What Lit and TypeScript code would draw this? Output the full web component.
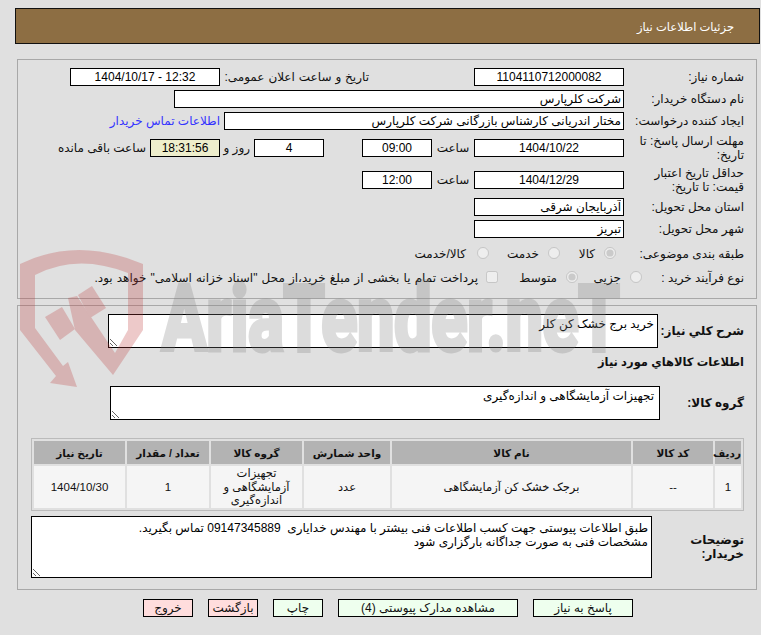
import { LitElement, html, css } from "lit";
import { customElement } from "lit/decorators.js";

@customElement("app-root")
export class AppRoot extends LitElement {
  static styles = css`
    :host {
      display: block;
      position: relative;
      width: 761px;
      height: 635px;
      overflow: hidden;
      background: #e0e0e0;
      color: #111;
      font: 12px/14px "Liberation Sans", "DejaVu Sans", sans-serif;
    }
    * { box-sizing: border-box; }
    .page { padding-top: 8px; }
    .title {
      height: 36px;
      margin: 0 1px 0 15px;
      padding: 1px 25px 0 0;
      display: flex;
      align-items: center;
      background: #8d6e43;
      border: 1px solid #111;
      color: #fff;
      font-size: 11.5px;
    }
    .panel {
      margin: 0 4px 0 17px;
      border: 1px solid #a8a8a8;
      padding-right: 12px;
    }
    .p1 { margin-top: 15px; height: 240px; padding-top: 8px; }
    .p2 { margin-top: 6px; height: 285px; padding-top: 8px; }
    .row {
      display: flex;
      align-items: center;
      gap: 4px;
      height: 18px;
      margin-bottom: 4px;
    }
    .row.tall { height: 28px; }
    .lab { width: 116px; flex: none; }
    .f {
      height: 18px;
      flex: none;
      border: 1px solid #000;
      background: #fff;
      color: #000;
      font: inherit;
      padding: 0 2px;
      text-align: right;
      outline: none;
      border-radius: 0;
    }
    .c { text-align: center; }
    .w150 { width: 150px; }
    .w70 { width: 70px; }
    .wide1 { width: 450px; }
    .wide2 { width: 400px; }
    .timer { background: #eeeecc; }
    .s1 { margin-right: 101px; width: 145px; flex: none; white-space: nowrap; word-spacing: 0.6px; }
    .s2 { margin-right: 34px; }
    .unit { width: 34px; text-align: center; }
    .days { width: 26px; flex: none; white-space: nowrap; }
    .link { color: #3333ff; text-decoration: none; }
    .opts { margin-top: 7px; margin-bottom: 6px; gap: 0; }
    .opts2 { gap: 0; }
    .opts2 .lab { width: 102px; }
    .opts .lab { width: 120px; margin-left: 8px; }
    .opt { display: flex; align-items: center; gap: 9px; flex: none; }
    .opt input { margin: 0; width: 12px; height: 12px; flex: none; position: relative; top: -1px; }
    .o1 { width: 56px; }
    .o2 { width: 71px; }
    .o3 { gap: 11px; }
    .o4 { width: 64px; }
    .o5 { width: 80px; }
    .o6 { white-space: nowrap; gap: 8px; word-spacing: 0.8px; }
    .b { font-weight: bold; }
    .lb1 { width: 84px; flex: none; }
    textarea {
      display: block;
      flex: none;
      border: 1px solid #000;
      background: #fff;
      color: #000;
      font: inherit;
      padding: 2px 3px;
      outline: none;
      border-radius: 0;
      overflow: hidden;
    }
    .t1 { width: 550px; height: 34px; }
    .t2 { padding-right: 5px; }
    .t3 { width: 621px; height: 62px; line-height: 14.5px; padding-top: 4px; }
    .r-t { height: 34px; margin-bottom: 6px; gap: 2px; }
    .r-h { height: 16px; margin-bottom: 16px; font-size: 11.5px; }
    .r-g { height: 34px; margin-bottom: 18px; gap: 0; }
    .r-d { height: 62px; margin: 5px 0 0; gap: 8px; }
    table {
      width: 713px;
      table-layout: fixed;
      border-collapse: separate;
      border-spacing: 2px;
      border: 1px solid #bbb;
    }
    th, td { padding: 0; text-align: center; font-size: 11.5px; }
    th { background: #b3b3b3; height: 23px; font-size: 10.5px; }
    td { background: #f5f5f5; height: 41px; line-height: 13.5px; padding-top: 1px; }
    .btns {
      display: flex;
      gap: 15px;
      margin-top: 9px;
      padding-right: 128px;
    }
    button {
      height: 18px;
      flex: none;
      padding: 0;
      font: inherit;
      color: #111;
      border: 1px solid #000;
      border-radius: 0;
      background: #eeffee;
    }
    .bw1 { width: 100px; }
    .bw2 { width: 180px; }
    .bw3 { width: 50px; }
    .red { background: #ffdddd; }
    .mark {
      position: absolute;
      inset: 0;
      width: 761px;
      height: 635px;
      pointer-events: none;
    }
    .mark .sh { fill: #be3c3c; opacity: 0.27; }
    .mark .tx { opacity: 0.27; fill: #808080; stroke: #808080; stroke-width: 5px; }
    .mark text { font: bold 90px "Roboto", sans-serif; }
  `;

  render() {
    return html`
      <div class="page" dir="rtl">
        <div class="title">جزئیات اطلاعات نیاز</div>

        <div class="panel p1">
          <div class="row">
            <div class="lab">شماره نیاز:</div>
            <input class="f w150 c" readonly value="1104110712000082" />
            <div class="s1">تاریخ و ساعت اعلان عمومی:</div>
            <input class="f w150 c" dir="ltr" readonly value="1404/10/17 - 12:32" />
          </div>
          <div class="row">
            <div class="lab">نام دستگاه خریدار:</div>
            <input class="f wide1" readonly value="شرکت کلرپارس" />
          </div>
          <div class="row">
            <div class="lab">ایجاد کننده درخواست:</div>
            <input class="f wide2" readonly value="مختار اندریانی کارشناس بازرگانی شرکت کلرپارس" />
            <a class="link" href="#">اطلاعات تماس خریدار</a>
          </div>
          <div class="row tall">
            <div class="lab">مهلت ارسال پاسخ: تا تاریخ:</div>
            <input class="f w150 c" readonly value="1404/10/22" />
            <div class="unit">ساعت</div>
            <input class="f w70 c" readonly value="09:00" />
            <input class="f w70 c s2" readonly value="4" />
            <div class="days">روز و</div>
            <input class="f w70 c timer" readonly value="18:31:56" />
            <div>ساعت باقی مانده</div>
          </div>
          <div class="row tall">
            <div class="lab">حداقل تاریخ اعتبار قیمت: تا تاریخ:</div>
            <input class="f w150 c" readonly value="1404/12/29" />
            <div class="unit">ساعت</div>
            <input class="f w70 c" readonly value="12:00" />
          </div>
          <div class="row">
            <div class="lab">استان محل تحویل:</div>
            <input class="f w150" readonly value="آذربایجان شرقی" />
          </div>
          <div class="row">
            <div class="lab">شهر محل تحویل:</div>
            <input class="f w150" readonly value="تبریز" />
          </div>
          <div class="row opts">
            <div class="lab">طبقه بندی موضوعی:</div>
            <label class="opt o1"><input type="radio" name="a" disabled checked />کالا</label>
            <label class="opt o2"><input type="radio" name="a" disabled />خدمت</label>
            <label class="opt o3"><input type="radio" name="a" disabled />کالا/خدمت</label>
          </div>
          <div class="row opts2">
            <div class="lab">نوع فرآیند خرید :</div>
            <label class="opt o4"><input type="radio" name="b" disabled />جزیی</label>
            <label class="opt o5"><input type="radio" name="b" disabled checked />متوسط</label>
            <label class="opt o6"><input type="checkbox" disabled />پرداخت تمام یا بخشی از مبلغ خرید،از محل "اسناد خزانه اسلامی" خواهد بود.</label>
          </div>
        </div>

        <div class="panel p2">
          <div class="row r-t">
            <div class="lb1 b">شرح کلي نياز:</div>
            <textarea class="t1" readonly>خرید برج خشک کن کلر</textarea>
          </div>
          <div class="row r-h b">اطلاعات کالاهاي مورد نياز</div>
          <div class="row r-g">
            <div class="lb1 b">گروه کالا:</div>
            <textarea class="t1 t2" readonly>تجهیزات آزمایشگاهی و اندازه‌گیری</textarea>
          </div>
          <table>
            <colgroup>
              <col style="width:26px" /><col style="width:80px" /><col style="width:239px" /><col style="width:86px" />
              <col style="width:91px" /><col style="width:82px" /><col style="width:91px" />
            </colgroup>
            <thead>
              <tr>
                <th>ردیف</th><th>کد کالا</th><th>نام کالا</th><th>واحد شمارش</th>
                <th>گروه کالا</th><th>تعداد / مقدار</th><th>تاریخ نیاز</th>
              </tr>
            </thead>
            <tbody>
              <tr>
                <td>1</td><td>--</td><td>برجک خشک کن آزمایشگاهی</td><td>عدد</td>
                <td>تجهیزات آزمایشگاهی و اندازه‌گیری</td><td>1</td><td>1404/10/30</td>
              </tr>
            </tbody>
          </table>
          <div class="row r-d">
            <div class="lb1 b">توضیحات خریدار:</div>
            <textarea class="t3" readonly>طبق اطلاعات پیوستی جهت کسب اطلاعات فنی بیشتر با مهندس خدایاری  09147345889 تماس بگیرید.
مشخصات فنی به صورت جداگانه بارگزاری شود</textarea>
          </div>
        </div>

        <div class="btns">
          <button class="bw1">پاسخ به نیاز</button>
          <button class="bw2">مشاهده مدارک پیوستی (4)</button>
          <button class="bw3">چاپ</button>
          <button class="bw3 red">بازگشت</button>
          <button class="bw3 red">خروج</button>
        </div>
      </div>

      <svg class="mark" viewBox="0 0 761 635" aria-hidden="true">
        <g class="sh">
          <path d="M20,264 Q77,236 143,264 L143,330 L113,375 L75,330 L68,298 L77,296 L115,353 L128,330 L128,273 Q77,253 35,275 L35,328 L63,366 L68,362 L77,387 L50,383 L56,376 L20,330 Z" />
          <path d="M45,317 L62,307 L75,329 L60,340 Z" />
          <path d="M78,295 L92,286 L106,308 L90,318 Z" />
        </g>
        <g class="tx">
          <text transform="translate(162 350) scale(0.735 1)" direction="ltr">AriaTender.neT</text>
        </g>
      </svg>
    `;
  }
}
